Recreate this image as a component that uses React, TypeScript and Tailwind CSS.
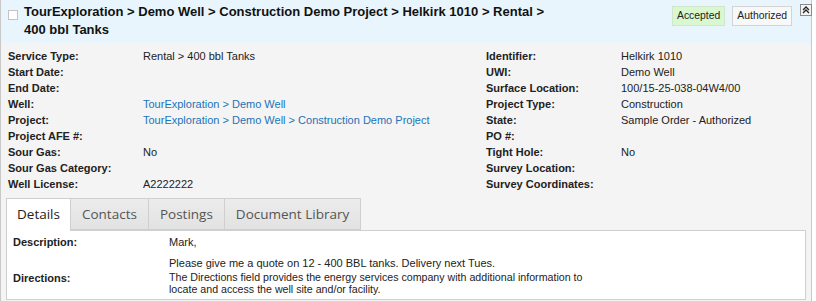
import React from 'react';

const leftRows: [string, string, boolean?][] = [
  ['Service Type:', 'Rental > 400 bbl Tanks'],
  ['Start Date:', ''],
  ['End Date:', ''],
  ['Well:', 'TourExploration > Demo Well', true],
  ['Project:', 'TourExploration > Demo Well > Construction Demo Project', true],
  ['Project AFE #:', ''],
  ['Sour Gas:', 'No'],
  ['Sour Gas Category:', ''],
  ['Well License:', 'A2222222'],
];

const rightRows: [string, string][] = [
  ['Identifier:', 'Helkirk 1010'],
  ['UWI:', 'Demo Well'],
  ['Surface Location:', '100/15-25-038-04W4/00'],
  ['Project Type:', 'Construction'],
  ['State:', 'Sample Order - Authorized'],
  ['PO #:', ''],
  ['Tight Hole:', 'No'],
  ['Survey Location:', ''],
  ['Survey Coordinates:', ''],
];

const tabs = ['Details', 'Contacts', 'Postings', 'Document Library'];

function CollapseIcon() {
  return (
    <svg width="12" height="12" viewBox="0 0 12 12" className="block">
      <rect x="0.5" y="0.5" width="11" height="11" fill="#f4f4f4" stroke="#8a8a8a" />
      <path d="M3 6 L6 3 L9 6" fill="none" stroke="#222" strokeWidth="1.3" />
      <path d="M3 9 L6 6 L9 9" fill="none" stroke="#222" strokeWidth="1.3" />
    </svg>
  );
}

export default function App() {
  return (
    <div className="w-[816px] h-[301px] bg-white overflow-hidden font-['Liberation_Sans',Arial,sans-serif] text-[#222]">
      <div className="w-[812px] h-[301px] border-x border-[#c8c8c8] bg-[#f4f4f4]">
        {/* Header */}
        <div className="h-[43px] bg-[#e8f5fd] flex items-start">
          <div className="w-[10px] h-[10px] border border-[#c4c4c4] bg-white ml-[7px] mt-[10px] shrink-0" />
          <div className="w-[545px] ml-[6px] mt-[3px] text-[13px] font-bold leading-[18px] text-[#111]">
            TourExploration &gt; Demo Well &gt; Construction Demo Project &gt; Helkirk 1010 &gt; Rental &gt; 400 bbl Tanks
          </div>
          <div className="ml-auto flex items-start gap-[7px] mt-[6px]">
            <span className="h-[20px] px-[4px] bg-[#d9f7d0] border border-[#d2e6cc] text-[10.4px] leading-[18px] text-[#222]">Accepted</span>
            <span className="h-[20px] px-[4px] bg-[#f8f8f8] border border-[#d4d4d4] text-[10.4px] leading-[18px] text-[#222]">Authorized</span>
          </div>
          <div className="ml-[8px] mr-[-1px] mt-[4px]">
            <CollapseIcon />
          </div>
        </div>

        {/* Fields */}
        <div className="flex pl-[7px] pt-[5px] text-[11px] leading-[16px]">
          <div className="w-[478px]">
            {leftRows.map(([label, value, link]) => (
              <div key={label} className="flex h-[16px]">
                <span className="w-[135px] font-bold">{label}</span>
                <span className={link ? 'text-[#2273b9]' : ''}>{value}</span>
              </div>
            ))}
          </div>
          <div>
            {rightRows.map(([label, value]) => (
              <div key={label} className="flex h-[16px]">
                <span className="w-[135px] font-bold">{label}</span>
                <span>{value}</span>
              </div>
            ))}
          </div>
        </div>

        {/* Tabs */}
        <div className="mx-[5px] mt-[6px]">
          <div className="flex h-[32px] font-['Open_Sans',sans-serif] text-[13.5px]">
            {tabs.map((t, i) => (
              <div
                key={t}
                className={
                  i === 0
                    ? 'h-[33px] px-[10px] pt-[5px] border border-[#cfcfcf] border-b-0 bg-white text-[#222] relative z-10'
                    : 'h-[32px] px-[11px] pt-[5px] border border-l-0 border-[#cfcfcf] bg-gradient-to-b from-[#ececec] to-[#e2e2e2] text-[#555]'
                }
              >
                {t}
              </div>
            ))}
          </div>
          <div className="h-[70px] bg-white border border-[#cfcfcf] text-[11px] leading-[12px] px-[6px] pt-[5px]">
            <div className="flex">
              <span className="w-[156px] font-bold">Description:</span>
              <div>
                <div>Mark,</div>
                <div className="h-[9px]" />
                <div>Please give me a quote on 12 - 400 BBL tanks. Delivery next Tues.</div>
              </div>
            </div>
            <div className="flex mt-[2px]">
              <span className="w-[156px] font-bold pt-[1px]">Directions:</span>
              <div className="w-[430px] text-[10.65px]">
                The Directions field provides the energy services company with additional information to locate and access the well site and/or facility.
              </div>
            </div>
          </div>
        </div>
      </div>
    </div>
  );
}
